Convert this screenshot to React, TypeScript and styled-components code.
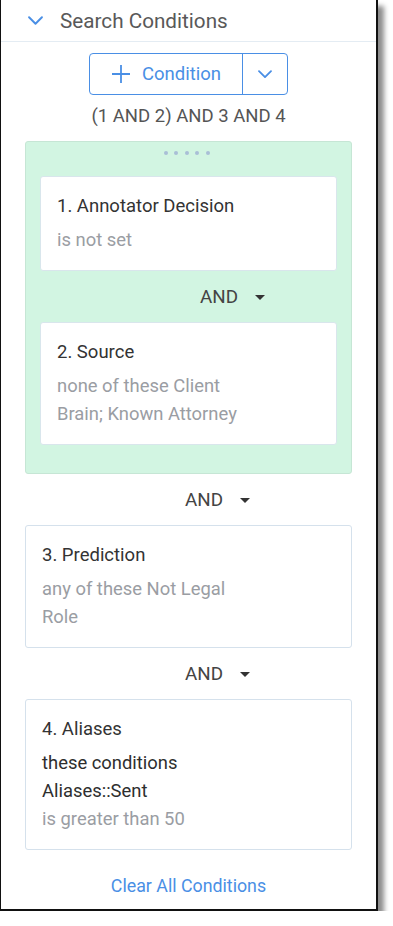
import styled, { createGlobalStyle } from 'styled-components';

const GlobalStyle = createGlobalStyle`
  body {
    margin: 0;
    background: #ffffff;
    font-family: Roboto, 'Liberation Sans', Arial, sans-serif;
  }
`;

interface ConditionInterface {
  title: string;
  lines: { text: string; muted: boolean }[];
}

const Frame = styled.div`
  width: 375px;
  height: 909px;
  background: #ffffff;
  border-left: 1px solid #111;
  border-right: 2px solid #111;
  border-bottom: 2px solid #111;
  box-shadow: 6px 6px 5px rgba(0, 0, 0, 0.45);
  display: flex;
  flex-direction: column;
`;

const Header = styled.div`
  display: flex;
  align-items: center;
  height: 41px;
  padding-left: 27px;
  gap: 17px;
  border-bottom: 1px solid #e4ecf3;
`;

const HeaderTitle = styled.h2`
  margin: 0;
  font-size: 20.7px;
  font-weight: 400;
  color: #595959;
`;

const Body = styled.div`
  display: flex;
  flex-direction: column;
  padding: 11px 24px 0 24px;
`;

const ButtonGroup = styled.div`
  display: flex;
  align-self: center;
  height: 42px;
  border: 1.5px solid #4a8fe5;
  border-radius: 4px;
  box-sizing: border-box;
`;

const AddButton = styled.button`
  display: flex;
  align-items: center;
  gap: 11px;
  width: 153px;
  padding: 0 0 0 21px;
  background: none;
  border: none;
  border-right: 1.5px solid #4a8fe5;
  font-family: inherit;
  font-size: 18.5px;
  color: #4a8fe5;
  cursor: pointer;
`;

const MenuButton = styled.button`
  display: flex;
  align-items: center;
  justify-content: center;
  width: 44px;
  padding: 0;
  background: none;
  border: none;
  cursor: pointer;
`;

const Logic = styled.div`
  text-align: center;
  font-size: 18.5px;
  color: #555555;
  line-height: 22px;
  margin: 10px 0 14px 0;
`;

const Group = styled.div`
  display: flex;
  flex-direction: column;
  background: #d2f5e2;
  border: 1px solid #c6e6d5;
  border-radius: 3px;
  padding: 0 14px 28px 14px;
`;

const Handle = styled.div`
  display: flex;
  justify-content: center;
  gap: 6.5px;
  height: 34px;
  padding-top: 9px;
  box-sizing: border-box;
  margin-left: -4px;

  & > span {
    width: 4px;
    height: 4px;
    border-radius: 50%;
    background: #a9bfd6;
  }
`;

const Card = styled.div<{ $inGroup?: boolean }>`
  background: #ffffff;
  border: 1px solid ${(props) => (props.$inGroup ? '#d9e6ec' : '#d5e1ec')};
  border-radius: 3px;
  padding: 15px 16px 16px 16px;
`;

const CardTitle = styled.div`
  font-size: 18.5px;
  line-height: 28px;
  color: #333333;
  margin-bottom: 6px;
`;

const CardLine = styled.div<{ $muted: boolean }>`
  font-size: 18.4px;
  line-height: 28px;
  color: ${(props) => (props.$muted ? '#9a9da3' : '#2e2e2e')};
`;

const Operator = styled.div`
  display: flex;
  align-items: center;
  height: 51px;
  padding-left: 160px;
  gap: 17px;
  font-size: 18.8px;
  color: #444444;
`;

const Caret = styled.span`
  width: 0;
  height: 0;
  border-left: 5.5px solid transparent;
  border-right: 5.5px solid transparent;
  border-top: 5.5px solid #333333;
  margin-top: 2px;
`;

const ClearLink = styled.a`
  align-self: center;
  margin-top: 25px;
  font-size: 17.8px;
  color: #4a8fe5;
  cursor: pointer;
`;

const ChevronIcon = ({ size, color }: { size: number; color: string }) => (
  <svg width={size} height={size * 0.6} viewBox="0 0 14 8" fill="none">
    <path
      d="M1 1l6 6 6-6"
      stroke={color}
      strokeWidth="1.8"
      strokeLinecap="round"
      strokeLinejoin="round"
    />
  </svg>
);

const PlusIcon = () => (
  <svg width="20" height="20" viewBox="0 0 20 20" fill="none">
    <path d="M10 1v18M1 10h18" stroke="#4a8fe5" strokeWidth="1.8" />
  </svg>
);

function ConditionCard({
  condition,
  inGroup,
}: {
  condition: ConditionInterface;
  inGroup?: boolean;
}) {
  return (
    <Card $inGroup={inGroup}>
      <CardTitle>{condition.title}</CardTitle>
      {condition.lines.map((line, index) => (
        <CardLine key={index} $muted={line.muted}>
          {line.text}
        </CardLine>
      ))}
    </Card>
  );
}

function AndOperator() {
  return (
    <Operator>
      AND
      <Caret />
    </Operator>
  );
}

const conditions: ConditionInterface[] = [
  {
    title: '1. Annotator Decision',
    lines: [{ text: 'is not set', muted: true }],
  },
  {
    title: '2. Source',
    lines: [
      { text: 'none of these Client', muted: true },
      { text: 'Brain; Known Attorney', muted: true },
    ],
  },
  {
    title: '3. Prediction',
    lines: [
      { text: 'any of these Not Legal', muted: true },
      { text: 'Role', muted: true },
    ],
  },
  {
    title: '4. Aliases',
    lines: [
      { text: 'these conditions', muted: false },
      { text: 'Aliases::Sent', muted: false },
      { text: 'is greater than 50', muted: true },
    ],
  },
];

function App() {
  return (
    <>
      <GlobalStyle />
      <Frame>
        <Header>
          <ChevronIcon size={15} color="#4a8fe5" />
          <HeaderTitle>Search Conditions</HeaderTitle>
        </Header>
        <Body>
          <ButtonGroup>
            <AddButton>
              <PlusIcon />
              Condition
            </AddButton>
            <MenuButton>
              <ChevronIcon size={14} color="#4a8fe5" />
            </MenuButton>
          </ButtonGroup>
          <Logic>(1 AND 2) AND 3 AND 4</Logic>
          <Group>
            <Handle>
              {[0, 1, 2, 3, 4].map((dot) => (
                <span key={dot} />
              ))}
            </Handle>
            <ConditionCard condition={conditions[0]} inGroup />
            <AndOperator />
            <ConditionCard condition={conditions[1]} inGroup />
          </Group>
          <AndOperator />
          <ConditionCard condition={conditions[2]} />
          <AndOperator />
          <ConditionCard condition={conditions[3]} />
          <ClearLink>Clear All Conditions</ClearLink>
        </Body>
      </Frame>
    </>
  );
}

export default App;
